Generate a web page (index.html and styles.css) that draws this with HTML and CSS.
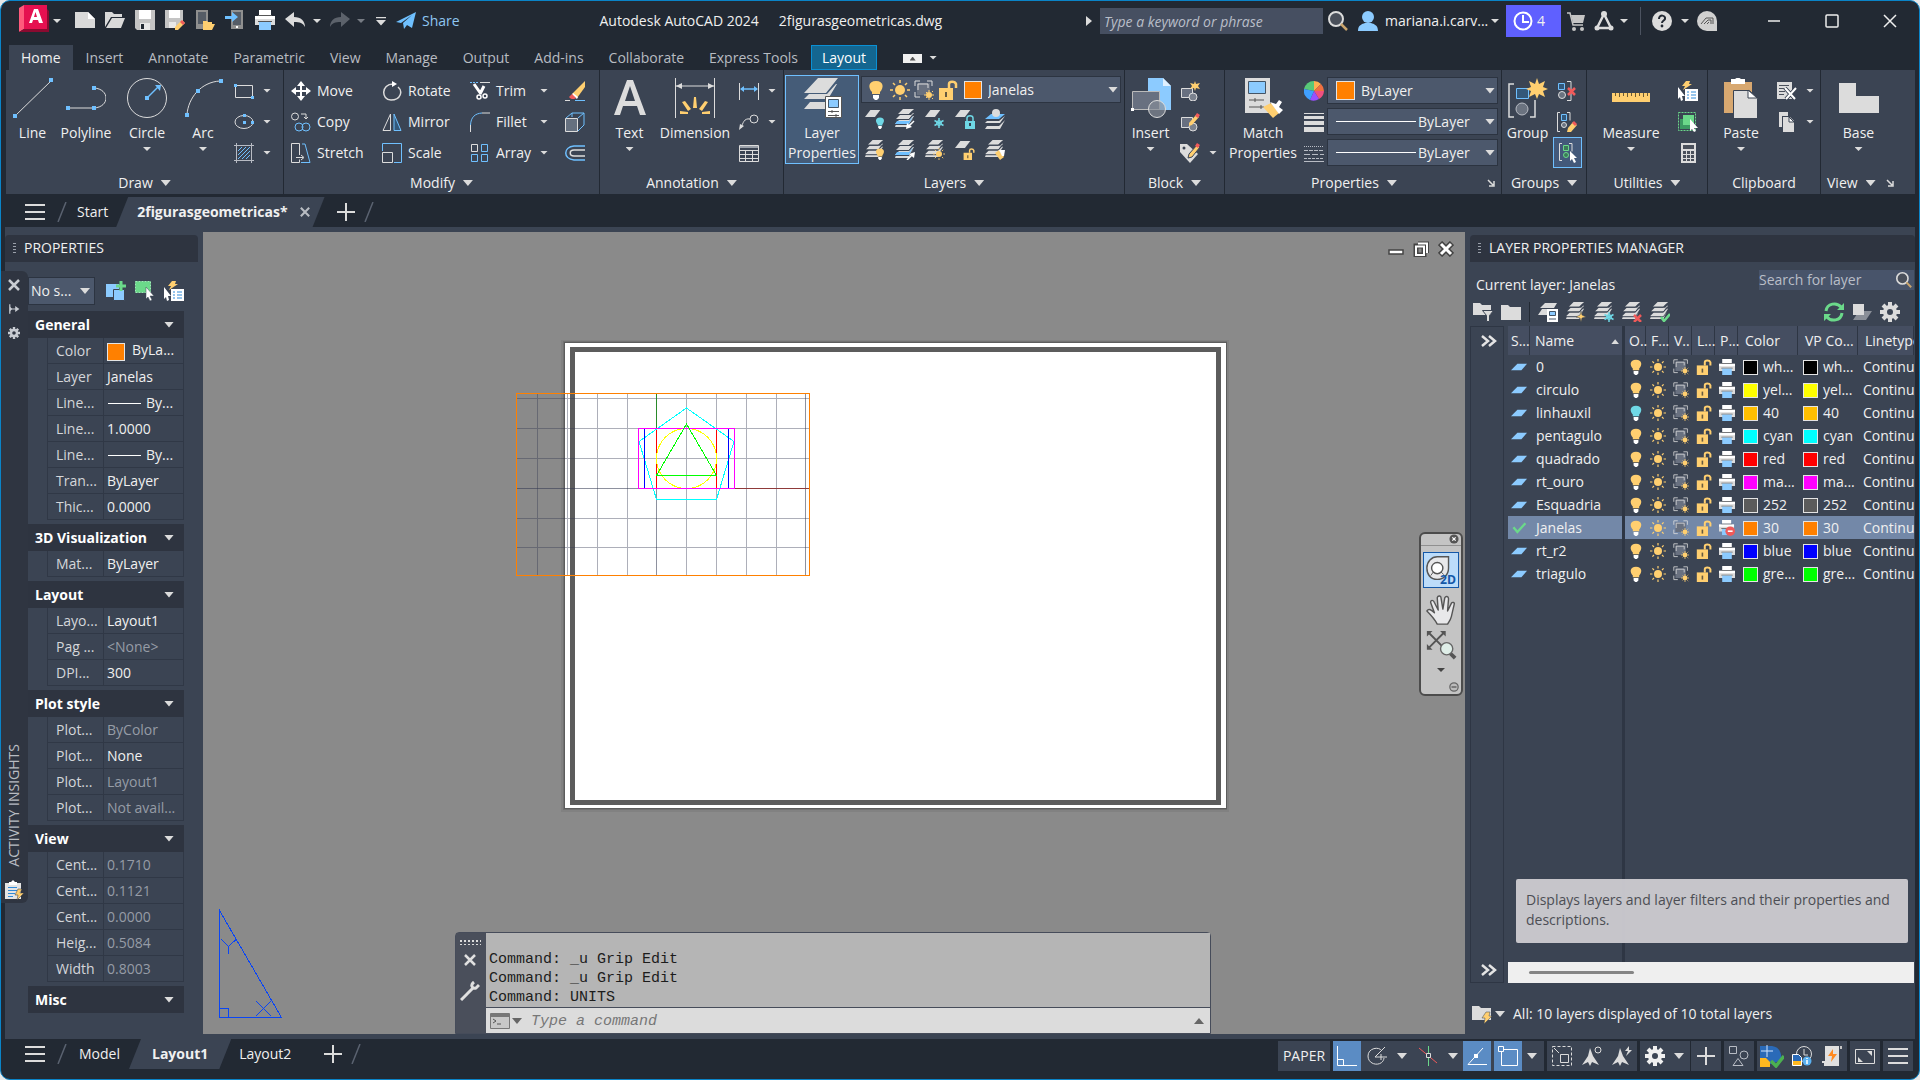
FILE: index.html
```html
<!DOCTYPE html>
<html lang="en">
<head>
<meta charset="utf-8">
<title>Autodesk AutoCAD 2024 - 2figurasgeometricas.dwg</title>
<link rel="stylesheet" href="styles.css">
</head>
<body>
<svg class="sprite" aria-hidden="true">
  <!-- quick access -->
  <symbol id="new" viewBox="0 0 20 20"><path fill="#d9d9d9" d="M0 2h13l7 7v9H0z"/><path fill="#fff" d="M13 2v7h7z"/></symbol>
  <symbol id="open" viewBox="0 0 20 20"><path fill="#d9d9d9" d="M0 2h7l2 2h8v3H6L0 17z"/><path fill="#d9d9d9" d="M7 8h13l-4 10H1z"/></symbol>
  <symbol id="save" viewBox="0 0 20 20"><path fill="#c4c4c4" d="M0 0h20v20H2l-2-2z"/><path fill="#fff" d="M4 0h12v9H4z"/><path fill="#e8e8e8" d="M5 13h10v7H5z"/><path fill="#222933" d="M6 14h3v5H6z"/></symbol>
  <symbol id="saveas" viewBox="0 0 20 20"><path fill="#c4c4c4" d="M0 0h18v11l-7 7H0z"/><path fill="#fff" d="M4 0h11v8H4z"/><path fill="#e8e8e8" d="M4 12h7v6H4z"/><path fill="#ffcf70" d="M17 10l3 3-7 7-3 0 0-3z"/><path fill="#f05a5a" d="M17 10l3 3-2 2-3-3z"/></symbol>
  <symbol id="mobopen" viewBox="0 0 20 20"><path fill="#8f8f8f" d="M1 0h12v19H1z"/><path fill="#555c66" d="M3 2h8v12H3z"/><path fill="#ffcf70" d="M8 11h4l1 1h4v2h3l-3 6H8z"/></symbol>
  <symbol id="mobsave" viewBox="0 0 20 20"><path fill="#8f8f8f" d="M6 0h12v19H6z"/><path fill="#555c66" d="M8 2h8v13H8z"/><path fill="#fff" d="M11 16h2v2h-2z"/><path fill="#6fc0ff" d="M0 6h7V2l6 5-6 5V9H0z"/></symbol>
  <symbol id="print" viewBox="0 0 20 20"><path fill="#fff" d="M4 0h12v5H4z"/><path fill="#dcdcdc" d="M0 6h20v9H0z"/><path fill="#555" d="M3 5h14v1H3zM3 11h14v1H3z"/><path fill="#fff" d="M0 6h20v3H0z"/><path fill="#8ccbff" d="M4 12h12v8H4z"/></symbol>
  <symbol id="undo" viewBox="0 0 20 20"><path fill="currentColor" d="M0 9l9-7v5c7 0 11 4 11 10-2-4-5-5-11-5v5z"/></symbol>
  <symbol id="redo" viewBox="0 0 20 20"><path fill="currentColor" d="M20 9l-9-7v5C4 7 0 11 0 17c2-4 5-5 11-5v5z"/></symbol>
  <symbol id="plane" viewBox="0 0 20 20"><path fill="#6fc0ff" d="M0 11L20 1l-4 16-5-3-3 4-1-6 9-8L5 12z"/></symbol>
  <symbol id="mag" viewBox="0 0 20 20"><circle cx="8" cy="8" r="7" fill="#4a505b" stroke="#dcdcdc" stroke-width="2"/><path stroke="#c9a46c" stroke-width="2.500" d="M13 13l6 6"/></symbol>
  <symbol id="user" viewBox="0 0 20 20"><circle cx="10" cy="6" r="6" fill="#8ccbff"/><path fill="#8ccbff" d="M0 20c0-6 4-7 7-8h6c3 1 7 2 7 8z"/></symbol>
  <symbol id="clock" viewBox="0 0 20 20"><circle cx="10" cy="10" r="8.500" fill="none" stroke="#fff" stroke-width="2"/><path fill="none" stroke="#fff" stroke-width="2" d="M10 4v7h6"/></symbol>
  <symbol id="cart" viewBox="0 0 20 20"><path fill="none" stroke="#c4c4c4" stroke-width="1.500" d="M1 2h3l3 12h10"/><path fill="#c4c4c4" d="M5 4h14l-2 8H7z"/><circle cx="8" cy="18" r="2" fill="#c4c4c4"/><circle cx="16" cy="18" r="2" fill="#c4c4c4"/></symbol>
  <symbol id="acc" viewBox="0 0 20 20"><path fill="none" stroke="#dcdcdc" stroke-width="2.500" d="M10 3L3 17h14z"/><circle cx="10" cy="3" r="3" fill="#dcdcdc"/><circle cx="3" cy="17" r="2.500" fill="#dcdcdc"/><circle cx="17" cy="17" r="2.500" fill="#dcdcdc"/></symbol>
  <symbol id="help" viewBox="0 0 20 20"><circle cx="10" cy="10" r="10" fill="#dcdcdc"/><path fill="none" stroke="#222933" stroke-width="2" d="M7 8c0-5 7-4 6 0-1 2-3 2-3 4"/><circle cx="10" cy="15" r="1.400" fill="#222933"/></symbol>
  <symbol id="adsk" viewBox="0 0 20 20"><path fill="#d0d0d0" d="M10 0a10 10 0 0110 10v10H10A10 10 0 0110 0z"/><path fill="none" stroke="#555" d="M4 13l5-6h7v6M7 13l4-4h3v4M10 13l2-2"/></symbol>
  <!-- draw -->
  <symbol id="line" viewBox="0 0 40 40"><path stroke="#dcdcdc" d="M2 38L39 2"/><path fill="#6fc0ff" d="M0 36h4v4H0zM36 0h4v4h-4z"/></symbol>
  <symbol id="pline" viewBox="0 0 40 40"><path fill="none" stroke="#dcdcdc" d="M2 30h26c16-1 16-19 0-20"/><path fill="#6fc0ff" d="M0 28h4v4H0zM26 28h4v4h-4zM26 8h4v4h-4z"/></symbol>
  <symbol id="circ" viewBox="0 0 40 40"><circle cx="20" cy="20" r="19.500" fill="none" stroke="#dcdcdc"/><path stroke="#6fc0ff" stroke-width="1.500" d="M20 20L32 8"/><path fill="#6fc0ff" d="M18 18h4v4h-4zM28 7l6 0-1 6z"/></symbol>
  <symbol id="arc" viewBox="0 0 40 40"><path fill="none" stroke="#dcdcdc" d="M4 37C5 20 18 4 37 3"/><path fill="#6fc0ff" d="M2 35h4v4H2zM13 11h4v4h-4zM36 1h4v4h-4z"/></symbol>
  <symbol id="rect" viewBox="0 0 20 20"><path fill="none" stroke="#dcdcdc" d="M1.500 4.500h17v12h-17z"/><path fill="#6fc0ff" d="M0 3h3v3H0zM17 15h3v3h-3z"/></symbol>
  <symbol id="ell" viewBox="0 0 20 20"><ellipse cx="10" cy="10" rx="9" ry="6.500" fill="none" stroke="#dcdcdc"/><path fill="#6fc0ff" d="M9 2h3v3H9zM9 9h3v3H9zM17 9h3v3h-3z"/></symbol>
  <symbol id="hatch" viewBox="0 0 20 20"><path stroke="#b8bcc4" d="M2.500 0v20M17.500 0v20M0 2.500h20M0 17.500h20"/><path stroke="#6fc0ff" d="M4 8l4-4M4 12l8-8M4 16L16 4M8 16l8-8M12 16l4-4"/></symbol>
  <!-- modify -->
  <symbol id="move" viewBox="0 0 20 20"><path fill="#fff" d="M10 0l4 5h-3v4h4V6l5 4-5 4v-3h-4v4h3l-4 5-4-5h3v-4H5v3l-5-4 5-4v3h4V5H6z"/></symbol>
  <symbol id="rotate" viewBox="0 0 20 20"><path fill="none" stroke="#dcdcdc" stroke-width="1.500" d="M11 3C-1 3-1 19 9 19c10 0 12-9 7-13"/><path fill="#fff" d="M10 0l5 3-5 3z"/></symbol>
  <symbol id="trim" viewBox="0 0 20 20"><path stroke="#6fc0ff" stroke-dasharray="2 1" d="M0 1.500h9"/><path stroke="#dcdcdc" d="M10 1.500h10"/><path stroke="#fff" stroke-width="3" d="M4 3l7 10M14 5l-4 8"/><circle cx="9" cy="16" r="2" fill="none" stroke="#fff" stroke-width="1.500"/><circle cx="15" cy="15" r="2" fill="none" stroke="#fff" stroke-width="1.500"/></symbol>
  <symbol id="erase" viewBox="0 0 20 20"><path fill="#ffcf70" d="M20 0v6l-8 11-5-4z"/><path fill="#fff" d="M8 12l5 4-1 2-5-4z"/><path fill="#f05a5a" d="M7 13l4 4c-2 2-6 1-7-1z"/><path stroke="#6fc0ff" d="M10 19.500h10"/><path stroke="#dcdcdc" d="M0 19.500h5"/></symbol>
  <symbol id="copy" viewBox="0 0 20 20"><g fill="none" stroke="#dcdcdc"><circle cx="4" cy="4.500" r="3.500"/><path d="M10 2h5v5M13 5l2 2 2-2"/></g><g fill="none" stroke="#6fc0ff"><circle cx="8" cy="15" r="4"/><circle cx="15" cy="15" r="4"/></g></symbol>
  <symbol id="mirror" viewBox="0 0 20 20"><path fill="none" stroke="#dcdcdc" d="M8.500 2v16.500H1z"/><path fill="#33587a" stroke="#6fc0ff" d="M12 2v16.500h7z"/></symbol>
  <symbol id="fillet" viewBox="0 0 20 20"><path fill="none" stroke="#6fc0ff" d="M.5 13C1 5 5 1.500 12 1"/><path stroke="#dcdcdc" d="M12 1h8M.5 13v7"/></symbol>
  <symbol id="box" viewBox="0 0 20 20"><path fill="#65707f" stroke="#dcdcdc" d="M.5 6.500h12v13H.5z"/><path fill="none" stroke="#6fc0ff" d="M1 6l6-5h12v12l-6 6M13 6l6-5M7 1v4"/></symbol>
  <symbol id="stretch" viewBox="0 0 20 20"><path fill="none" stroke="#dcdcdc" d="M8.500 12V.5h-8v19h8v-3M5 14.500h7M10 12l3 2.500-3 2.500"/><path fill="none" stroke="#6fc0ff" d="M11 1h3l5 18.500h-9"/></symbol>
  <symbol id="scale" viewBox="0 0 20 20"><path fill="none" stroke="#6fc0ff" d="M.5 8V.5h19v19H12"/><path fill="none" stroke="#dcdcdc" d="M.5 9.500h10v10H.5z"/></symbol>
  <symbol id="array" viewBox="0 0 20 20"><path fill="none" stroke="#dcdcdc" d="M1.500 1.500h6v7h-6z"/><path fill="none" stroke="#6fc0ff" d="M11.500 1.500h6v7h-6zM1.500 11.500h6v7h-6zM11.500 11.500h6v7h-6z"/></symbol>
  <symbol id="offset" viewBox="0 0 20 20"><path fill="none" stroke="#6fc0ff" stroke-width="1.500" d="M20 3H9C-2 4-2 16 9 17h11"/><path fill="none" stroke="#dcdcdc" stroke-width="1.500" d="M20 7H9C4 7 4 13 9 13h11"/></symbol>
  <!-- annotation -->
  <symbol id="text" viewBox="0 0 40 40"><path fill="#dcdcdc" fill-rule="evenodd" d="M4 37L17 2h6l13 35h-6l-3-9H13l-3 9zM15 23h10L20 8z"/></symbol>
  <symbol id="dim" viewBox="0 0 40 40"><path stroke="#dcdcdc" d="M.5 0v40M39.500 0v40M1 8h38"/><path fill="#dcdcdc" d="M1 8l6-3v6zM39 8l-6-3v6z"/><path fill="#ffcf70" d="M18 30l1-11h2l1 11zM7 24l3-1 6 8-3 2zM33 24l-3-1-6 8 3 2zM5 36v-3l8 1v2zM35 36v-3l-8 1v2z"/></symbol>
  <symbol id="lindim" viewBox="0 0 20 20"><path stroke="#dcdcdc" d="M.5 2v17M19.500 2v17"/><path stroke="#6fc0ff" stroke-width="1.500" d="M2 8h16"/><path fill="#6fc0ff" d="M1 8l4-3v6zM19 8l-4-3v6z"/></symbol>
  <symbol id="leader" viewBox="0 0 20 20"><circle cx="15" cy="7" r="4" fill="none" stroke="#dcdcdc"/><path fill="none" stroke="#dcdcdc" d="M11 7c-6-1-7 4-9 9"/><path fill="#dcdcdc" d="M0 18l1-6 4 2z"/></symbol>
  <symbol id="table" viewBox="0 0 20 20"><path fill="none" stroke="#dcdcdc" d="M.5 2.500h19v16H.5zM.5 7.500h19M.5 11.500h19M.5 15.500h19M6.500 7v11M13.500 7v11"/><path fill="#9ba1aa" d="M1 3h18v2H1z"/></symbol>
  <!-- layers -->
  <symbol id="stack" viewBox="0 0 20 20"><path fill="#dcdcdc" d="M8 0h11l-5 5H3zM6 6h10l2-2h1l-5 6H1l4-4zM5 11h9l4-4h1l-5 8H0l4-4z"/><path fill="#dcdcdc" d="M1 15h12l5-5-4 8H0z"/><path fill="none" stroke="#3b4453" d="M2 5.500h12l4-4M1 10.500h13l4-5M0 15.500h14l4-5"/></symbol>
  <symbol id="sheet" viewBox="0 0 20 20"><path fill="#dcdcdc" d="M6 1h11l-6 8H0z"/></symbol>
  <symbol id="layerprop" viewBox="0 0 40 40"><path fill="#dcdcdc" d="M16 0h20L24 15H2zM11 16h14l9-10h1l-9 15H2l5-5zM11 24h13v7H2l6-7z"/><path fill="#fff" stroke="#555" d="M23.500 18.500h16v21h-16z"/><path fill="#8ccbff" stroke="#456" d="M26.500 21.500h10v8h-10z"/><path stroke="#555" d="M26 33.500h11M26 37.500h11M30 32v3M34 36v3"/></symbol>
  <symbol id="bulb" viewBox="0 0 20 20"><path fill="#ffcf70" d="M10 1c8 0 8 7 4 11v2H6v-2C2 8 2 1 10 1z"/><path fill="#fff" d="M7 15h6v3l-2 2H9l-2-2z"/></symbol>
  <symbol id="bulboff" viewBox="0 0 20 20"><path fill="#6fd8e6" d="M10 1c8 0 8 7 4 11v2H6v-2C2 8 2 1 10 1z"/><path fill="#fff" d="M7 15h6v3l-2 2H9l-2-2z"/></symbol>
  <symbol id="sun" viewBox="0 0 20 20"><circle cx="10" cy="10" r="5" fill="#ffcf70"/><path stroke="#ffcf70" stroke-width="1.500" d="M10 0v3M10 17v3M0 10h3M17 10h3M3 3l2 2M15 15l2 2M3 17l2-2M15 5l2-2"/></symbol>
  <symbol id="vp" viewBox="0 0 20 20"><path fill="#697180" d="M3 3h13v12H3z"/><path fill="none" stroke="#dcdcdc" d="M1 6V1h5M13 1h5v5M1 12v5h5M4 10V4h10v4"/><circle cx="15" cy="15" r="3" fill="#ffcf70"/><path stroke="#ffcf70" d="M15 10v2M15 18v2M10 15h2M18 15h2M12 12l1 1M18 18l1 1M12 18l1-1M18 12l1-1"/></symbol>
  <symbol id="lock" viewBox="0 0 20 20"><path fill="#ffcf70" d="M1 8h14v12H1z"/><path fill="none" stroke="#ffcf70" stroke-width="2.500" d="M11 8V4c0-3 6-3 7 0v4"/><path fill="#665a40" d="M7 12h2v5H7z"/></symbol>
  <symbol id="l-off" viewBox="0 0 20 20"><use href="#sheet" width="18" height="18"/><use href="#bulboff" x="9" y="8" width="12" height="12"/></symbol>
  <symbol id="l-iso" viewBox="0 0 20 20"><use href="#stack" width="20" height="20"/><path fill="#6fc0ff" d="M2 12h12l4-5-4 8H0z"/><path stroke="#fff" stroke-width="1.500" d="M19 12l-6 6"/><path fill="#fff" d="M11 20l1-6 5 4z"/></symbol>
  <symbol id="l-uniso" viewBox="0 0 20 20"><use href="#stack" width="20" height="20"/><path fill="#6fc0ff" d="M2 12h12l4-5-4 8H0z"/><path stroke="#fff" stroke-width="1.500" d="M12 20l6-6"/><path fill="#fff" d="M20 12l-1 6-5-4z"/></symbol>
  <symbol id="flake" viewBox="0 0 20 20"><path stroke="#6fd8e6" stroke-width="3" d="M10 0v20M1 5l18 10M19 5L1 15"/><circle cx="10" cy="10" r="5" fill="none" stroke="#6fd8e6" stroke-width="2"/></symbol>
  <symbol id="l-frz" viewBox="0 0 20 20"><use href="#sheet" width="18" height="18"/><use href="#flake" x="9" y="9" width="10" height="10"/></symbol>
  <symbol id="l-lock" viewBox="0 0 20 20"><use href="#sheet" width="18" height="18"/><path fill="#6fd8e6" d="M10 12h10v8H10z"/><path fill="none" stroke="#6fd8e6" stroke-width="1.500" d="M12 12V9c0-3 6-3 6 0v3"/><path fill="#345" d="M14 14h2v3h-2z"/></symbol>
  <symbol id="l-cur" viewBox="0 0 20 20"><path fill="#6fc0ff" d="M6 5h14l-6 5H0z"/><path fill="#dcdcdc" d="M2 12h12l6-5-5 7H0zM2 17h12l6-6-5 9H0z"/><circle cx="11" cy="4" r="4" fill="#dcdcdc"/></symbol>
  <symbol id="l-on" viewBox="0 0 20 20"><use href="#stack" width="19" height="19"/><use href="#bulb" x="9" y="8" width="12" height="12"/></symbol>
  <symbol id="l-thaw" viewBox="0 0 20 20"><use href="#stack" width="19" height="19"/><use href="#sun" x="8" y="8" width="12" height="12"/></symbol>
  <symbol id="l-unl" viewBox="0 0 20 20"><use href="#sheet" width="18" height="18"/><use href="#lock" x="8" y="8" width="12" height="12"/></symbol>
  <symbol id="l-mat" viewBox="0 0 20 20"><use href="#stack" width="19" height="19"/><path fill="#ffcf70" d="M10 13l4-3 5 7-4 3z"/><path fill="#fff" d="M14 10l6 0-1 6-2 0z"/></symbol>
  <!-- block -->
  <symbol id="insert" viewBox="0 0 40 40"><path fill="#8ccbff" d="M17 0h15l8 8v24H17z"/><path fill="#dff0ff" d="M32 0v8h8z"/><path fill="#687080" stroke="#bbb" d="M1.500 13.500h27v18h-27z"/><circle cx="26" cy="31" r="8.500" fill="#878d98aa" stroke="#dcdcdc"/><path fill="#fff" d="M0 30h3v3H0z"/></symbol>
  <symbol id="b-new" viewBox="0 0 20 20"><path fill="#687080" stroke="#dcdcdc" d="M1.500 7.500h11v9h-11z"/><circle cx="13" cy="16" r="4" fill="#7b828e" stroke="#dcdcdc"/><path fill="#ffcf70" d="M15 0l1 3 4-1-2 3 2 3-4-1-1 3-1-3-4 1 2-3-2-3 4 1z"/></symbol>
  <symbol id="b-edit" viewBox="0 0 20 20"><path fill="#687080" stroke="#dcdcdc" d="M1.500 5.500h11v10h-11z"/><circle cx="13" cy="15" r="4" fill="#7b828e" stroke="#dcdcdc"/><path fill="#ffcf70" d="M16 3l3 2-7 8-3 1 0-3z"/><path fill="#f05a5a" d="M17 1l3 2-2 3-3-2z"/></symbol>
  <symbol id="b-tag" viewBox="0 0 20 20"><path fill="#dcdcdc" d="M0 1h7l11 10-8 9L0 9z"/><circle cx="4" cy="5" r="1.500" fill="#3b4453"/><path fill="#ffcf70" stroke="#3b4453" d="M17 2l3 2-8 10-4 1 1-4z"/><path fill="#f05a5a" d="M17 0l3 2-2 3-3-2z"/></symbol>
  <!-- properties -->
  <symbol id="match" viewBox="0 0 40 40"><path fill="#dcdcdc" d="M2 0h25v35H2z"/><path fill="#8ccbff" stroke="#456" d="M5.500 3.500h17v12h-17z"/><path stroke="#555" d="M6 22h15M6 29h15M12 20v4M18 27v4"/><path fill="#ffcf70" d="M20 29l8-4 8 10-6 5z"/><path fill="#fff" d="M27 24l6 2 3-4 3 2-3 5 4 3-4 4z"/></symbol>
  <symbol id="wheel" viewBox="0 0 20 20"><path fill="#58c878" d="M10 10L10 0A10 10 0 000 8z"/><path fill="#ffb050" d="M10 10V0a10 10 0 017 3z"/><path fill="#f07040" d="M10 10l7-7a10 10 0 013 7z"/><path fill="#f05080" d="M10 10h10a10 10 0 01-5 8z"/><path fill="#9a50ff" d="M10 10l5 8a10 10 0 01-9 1z"/><path fill="#40a0ff" d="M10 10l-4 9a10 10 0 01-6-11z"/></symbol>
  <symbol id="lw" viewBox="0 0 20 20"><path fill="#dcdcdc" d="M0 1h20v1H0zM0 4h20v3H0zM0 9h20v4H0zM0 15h20v5H0z"/></symbol>
  <symbol id="lt" viewBox="0 0 20 20"><g fill="none" stroke="#b8bcc4"><path stroke-dasharray="1 1" d="M0 3.500h20"/><path stroke-dasharray="4 1" d="M0 7.500h20"/><path stroke-dasharray="6 2" d="M0 11.500h20"/><path d="M0 15.500h20" stroke-dasharray="3 1"/><path d="M0 18.500h20"/></g></symbol>
  <!-- groups and utilities -->
  <symbol id="group" viewBox="0 0 40 40"><path fill="none" stroke="#dcdcdc" stroke-width="1.500" d="M6 6H1v33h5M22 39h5V22"/><path fill="#33587a" stroke="#6fc0ff" d="M8.500 10.500h12v10h-12z"/><circle cx="14" cy="31" r="6" fill="#6b7380" stroke="#b8bcc4"/><path fill="#ffcf70" d="M29 0l2 6 6-3-2 6 5 2-5 2 2 6-6-3-2 5-2-5-6 3 2-6-5-2 5-2-2-6 6 3z"/></symbol>
  <symbol id="ungroup" viewBox="0 0 20 20"><path fill="#33587a" stroke="#6fc0ff" d="M1.500 2.500h6v6h-6z"/><circle cx="5" cy="14" r="3.500" fill="#6b7380" stroke="#dcdcdc"/><path fill="none" stroke="#dcdcdc" d="M10 .5h4v19h-4"/><path stroke="#f05a5a" stroke-width="2.500" d="M11 7l7 7M18 7l-7 7"/></symbol>
  <symbol id="gedit" viewBox="0 0 20 20"><path fill="none" stroke="#dcdcdc" d="M3 .5H.5v19H3M10 .5h3v8"/><path fill="#33587a" stroke="#6fc0ff" d="M4.500 2.500h5v6h-5z"/><circle cx="7" cy="13" r="2.500" fill="#6b7380" stroke="#dcdcdc"/><path fill="#ffcf70" d="M16 10l4 3-6 7h-4l1-4z"/><path fill="#f05a5a" d="M17 9l3 3-2 2-3-3z"/></symbol>
  <symbol id="gsel" viewBox="0 0 20 20"><path fill="none" stroke="#dcdcdc" d="M4 .5H1.500v17H4M11 .5h3v8"/><path fill="#3c7a5a" stroke="#6bd98a" d="M5.500 2.500h5v5h-5z"/><circle cx="8" cy="12" r="2.500" fill="#3c7a5a" stroke="#6bd98a"/><path fill="#fff" d="M12 8l7 7-3 0 2 4-2 1-2-4-2 2z"/></symbol>
  <symbol id="ruler" viewBox="0 0 40 40"><path fill="#ffcf70" d="M1 15h38v9H1z"/><path stroke="#6b5a34" d="M4.500 15v3M8.500 15v4M12.500 15v3M16.500 15v4M20.500 15v3M24.500 15v4M28.500 15v3M32.500 15v4M36.500 15v3"/></symbol>
  <symbol id="qsel" viewBox="0 0 20 20"><path fill="#ffcf70" d="M8 0h4l-1 3h3l-9 6 2-4H4z"/><path fill="#fff" d="M0 6l7 9-3 0 1 4-2 1-1-4-2 2zM7 8h13v12H7z"/><path stroke="#2f8ad8" d="M9 11h2M13 11h5M9 14h2M13 14h5M9 17h2M13 17h5"/></symbol>
  <symbol id="selall" viewBox="0 0 20 20"><path fill="none" stroke="#6bd98a" stroke-dasharray="2 1" d="M.5 .5h17v18H.5z"/><path fill="#3c9a62" d="M2 7h10v10H2z"/><path fill="#6bd98a" d="M5 3h11v10H5z"/><path fill="#fff" d="M12 7l8 9-4 0 2 3-2 1-2-3-2 2z"/></symbol>
  <symbol id="calc" viewBox="0 0 20 20"><path fill="#dcdcdc" d="M3 0h15v20H3z"/><path fill="#4a505b" d="M5 2h11v4H5zM5 8h3v3H5zM9 8h3v3H9zM13 8h3v3h-3zM5 12h3v3H5zM9 12h3v3H9zM13 12h3v3h-3zM5 16h3v2H5zM9 16h3v2H9zM13 16h3v2h-3z"/></symbol>
  <symbol id="paste" viewBox="0 0 40 40"><path fill="#d8a870" d="M3 4h28v31H3z"/><path fill="#fff" d="M10 1h4l3-2 3 2h4v5H10z"/><path fill="#dcdcdc" stroke="#3b4453" d="M12.500 12.500h16l8 8v20h-24z"/><path fill="#fff" stroke="#3b4453" d="M27 12v8h9z"/></symbol>
  <symbol id="cut" viewBox="0 0 20 20"><path fill="#dcdcdc" d="M0 1h15v17H0z"/><path stroke="#4a505b" d="M2 4.500h10M2 7.500h8M2 10.500h6M2 13.500h5"/><path stroke="#3b4453" stroke-width="4" d="M8 7l10 11M19 7L9 18"/><path stroke="#fff" stroke-width="2" d="M8 7l10 11M19 7L9 18"/></symbol>
  <symbol id="copyc" viewBox="0 0 20 20"><path fill="#dcdcdc" d="M2 0h9v4H5v11H2z"/><path fill="#dcdcdc" d="M6 5h7l4 4v11H6z"/><path fill="#fff" stroke="#3b4453" d="M12 5v5h5z"/></symbol>
  <symbol id="base" viewBox="0 0 40 40"><path fill="#dcdcdc" d="M0 5h17v13h23v17H0z"/></symbol>
  <!-- palettes -->
  <symbol id="gear" viewBox="0 0 20 20"><circle cx="10" cy="10" r="5" fill="none" stroke="currentColor" stroke-width="4"/><path stroke="currentColor" stroke-width="4" d="M10 0v4M10 16v4M0 10h4M16 10h4M3 3l3 3M14 14l3 3M3 17l3-3M14 6l3-3"/></symbol>
  <symbol id="pin" viewBox="0 0 20 20"><path fill="none" stroke="currentColor" stroke-width="2" d="M3 2v16M3 10h12"/><path fill="currentColor" d="M12 5l7 5-7 5zM3 6l4 4-4 4z"/></symbol>
  <symbol id="insights" viewBox="0 0 20 20"><path fill="#e4e4e4" d="M1 3h16v16H1z"/><path fill="#fff" d="M5 2h2l2-2 2 2h2v3H5z"/><path stroke="#2f8ad8" d="M4 7.500h9M4 10.500h9M4 13.500h7M4 16.500h5"/><path fill="#ffcf70" stroke="#2f3541" stroke-width=".5" d="M14 9h4l-2 4h4l-7 7 1-5h-3z"/></symbol>
  <symbol id="pick" viewBox="0 0 20 20"><path fill="#8ccbff" d="M0 3h13v13H0z"/><path fill="#8ccbff" stroke="#3b4453" d="M7.500 8.500h11v11h-11z"/><path stroke="#6bd98a" stroke-width="3" d="M15 0v10M10 5h10"/></symbol>
  <symbol id="selobj" viewBox="0 0 20 20"><path fill="#6bd98a" stroke="#9bf0b4" stroke-dasharray="2 1" d="M.5 .5h15v11H.5z"/><path fill="#fff" stroke="#3b4453" stroke-width=".5" d="M11 6l8 9-4 0 2 4-2 1-2-4-2 2z"/></symbol>
  <symbol id="chev" viewBox="0 0 16 16"><path fill="none" stroke="#e4e4e4" stroke-width="2.500" d="M1 3l6 5-6 5M8 3l6 5-6 5"/></symbol>
  <symbol id="ffilter" viewBox="0 0 20 20"><path fill="#dcdcdc" d="M0 1h7l2 2h9v10H0z"/><path fill="#dcdcdc" stroke="#3b4453" d="M9.500 8.500h11l-4 5v6h-3v-6z"/></symbol>
  <symbol id="folder" viewBox="0 0 20 20"><path fill="#dcdcdc" d="M0 3h7l2 2h11v13H0z"/></symbol>
  <symbol id="lstate" viewBox="0 0 20 20"><path fill="#dcdcdc" d="M7 1h12l-3 5H2zM4 7h6v6H0z"/><path fill="#fff" d="M9 7h11v13H9z"/><path fill="#8ccbff" stroke="#456" d="M11.500 9.500h6v4h-6z"/><path stroke="#456" d="M11 17h7"/></symbol>
  <symbol id="lnew" viewBox="0 0 20 20"><use href="#stack" width="19" height="19"/><path fill="#ffcf70" stroke="#3b4453" stroke-width=".5" d="M15 9l1 4 4 2-4 1-1 4-1-4-4-1 4-2z"/></symbol>
  <symbol id="lvp" viewBox="0 0 20 20"><use href="#stack" width="19" height="19"/><use href="#flake" x="10" y="10" width="10" height="10"/></symbol>
  <symbol id="ldel" viewBox="0 0 20 20"><use href="#stack" width="19" height="19"/><path stroke="#f05a5a" stroke-width="2.500" d="M12 13l7 7M19 13l-7 7"/></symbol>
  <symbol id="lset" viewBox="0 0 20 20"><use href="#stack" width="19" height="19"/><path fill="none" stroke="#6bd98a" stroke-width="2.500" d="M11 15l3 4 6-7"/></symbol>
  <symbol id="refresh" viewBox="0 0 20 20"><path fill="none" stroke="#6bd98a" stroke-width="3" d="M2 9c1-8 11-9 15-4M18 11c-1 8-11 9-15 4"/><path fill="#6bd98a" d="M20 1v7h-7zM0 19v-7h7z"/></symbol>
  <symbol id="ovr" viewBox="0 0 20 20"><path fill="#8a8f98" d="M7 9h13l-6 9H1z"/><path fill="#dcdcdc" d="M1 2h11v11H1z"/></symbol>
  <symbol id="fbolt" viewBox="0 0 20 20"><path fill="#dcdcdc" d="M0 2h7l2 2h10v12H0z"/><path fill="#ffcf70" stroke="#3b4453" stroke-width=".5" d="M14 8h4l-1 4h3l-8 8 1-6h-3z"/></symbol>
  <symbol id="lay" viewBox="0 0 20 20"><path fill="#8ccbff" d="M8 6h12l-7 8H0z"/></symbol>
  <symbol id="tick" viewBox="0 0 20 20"><path fill="none" stroke="#6bd98a" stroke-width="3" d="M3 9l5 6L18 4"/></symbol>
  <symbol id="noprint" viewBox="0 0 20 20"><use href="#print" width="19" height="19"/><circle cx="14" cy="14" r="6" fill="#f05a5a"/><path stroke="#fff" stroke-width="2" d="M11 14h6"/></symbol>
  <!-- status bar -->
  <symbol id="ham" viewBox="0 0 20 20"><path fill="#dcdcdc" d="M0 2h20v2H0zM0 9h20v2H0zM0 16h20v2H0z"/></symbol>
  <symbol id="plus" viewBox="0 0 20 20"><path fill="#dcdcdc" d="M9 1h2v8h8v2h-8v8H9v-8H1V9h8z"/></symbol>
  <symbol id="ortho" viewBox="0 0 20 20"><path fill="none" stroke="#fff" d="M.5 0v19.500H20M.5 13.500h6v6"/></symbol>
  <symbol id="polar" viewBox="0 0 20 20"><path fill="none" stroke="#dcdcdc" d="M17 12c-1 9-16 8-16-2C1 2 12 0 15 5M8 11L18 1M8 11h12M14 8v6"/></symbol>
  <symbol id="iso" viewBox="0 0 20 20"><path stroke="#6bd98a" d="M10.500 0v20"/><path stroke="#f05a5a" d="M1 2l18 15"/><path fill="#3b4453" stroke="#dcdcdc" d="M8.500 7.500h4v4h-4z"/></symbol>
  <symbol id="otrack" viewBox="0 0 20 20"><path fill="none" stroke="#fff" d="M16 2L1 18.500h19"/><path fill="#fff" d="M7 8h4v4H7z"/></symbol>
  <symbol id="osnap" viewBox="0 0 20 20"><path fill="none" stroke="#fff" d="M6 3.500h13.500v16h-16V6M.5 .5h5v5h-5z"/></symbol>
  <symbol id="annovis" viewBox="0 0 20 20"><path fill="none" stroke="#dcdcdc" stroke-dasharray="3 2" d="M.5 .5h19v19H.5z"/><path fill="none" stroke="#dcdcdc" d="M8.500 8.500h8v8h-8zM2 2l5 5"/></symbol>
  <symbol id="anno1" viewBox="0 0 20 20"><path fill="#dcdcdc" d="M8 2l3 8 6 9-7-3-2 4-2-4-6 3 6-9z"/><circle cx="16" cy="4" r="3" fill="none" stroke="#dcdcdc"/></symbol>
  <symbol id="anno2" viewBox="0 0 20 20"><path fill="#dcdcdc" d="M8 2l3 8 6 9-7-3-2 4-2-4-6 3 6-9zM17 0l-4 5h3l-2 5 6-6h-3z"/></symbol>
  <symbol id="isol" viewBox="0 0 20 20"><path fill="none" stroke="#b8bcc4" d="M.5 .5h7v7h-7zM9 12.500l5 7H4z"/><circle cx="15" cy="9" r="4" fill="none" stroke="#b8bcc4"/></symbol>
  <symbol id="trust" viewBox="0 0 24 24"><path fill="#2a6ab8" d="M0 2h12c8 1 10 8 9 14l-9 4H0z"/><path fill="#ffb820" d="M0 14h6l4 4v5H0z"/><path stroke="#cfe4ff" d="M7 1v12M1 7h12"/><path fill="none" stroke="#4cb050" stroke-width="3.500" d="M11 17l5 5 8-10"/></symbol>
  <symbol id="hist" viewBox="0 0 20 20"><circle cx="12" cy="8" r="7.500" fill="none" stroke="#dcdcdc"/><path fill="none" stroke="#dcdcdc" d="M12 3v6h4"/><path fill="#2a6ab8" stroke="#fff" d="M.5 8.500h6l3 3v8h-9z"/><path fill="#ffb820" d="M1 15h8v4H1z"/><circle cx="15" cy="15" r="4.500" fill="#5ab0f0"/><path stroke="#fff" stroke-width="1.500" d="M15 12v1M15 14v4"/></symbol>
  <symbol id="script" viewBox="0 0 20 20"><path fill="#e0e0e0" d="M3 0h14v20H2v-3H0v-2h3z"/><path fill="#ff8a20" d="M11 3l-5 7h4l-1 6 6-8h-4z"/><path fill="#c4c4c4" d="M18 0h2v3h-2z"/></symbol>
  <symbol id="full" viewBox="0 0 20 20"><path fill="none" stroke="#dcdcdc" d="M.5 3.500h19v14H.5z"/><path fill="#dcdcdc" d="M12 5h5v5zM3 16v-5l5 5z"/></symbol>
  <symbol id="slash" viewBox="0 0 10 20"><path stroke="#5a6270" stroke-width="1.500" d="M9 0L1 20"/></symbol>
  <symbol id="launch" viewBox="0 0 8 8"><path fill="none" stroke="#dcdcdc" stroke-width="1.500" d="M1 1l5 5M7 2v5H2"/></symbol>
  <symbol id="x" viewBox="0 0 12 12"><path stroke="currentColor" stroke-width="2.500" d="M1 1l10 10M11 1L1 11"/></symbol>
</svg>

<div class="window">
  <header class="titlebar">
    <button class="logo" aria-label="Application menu"><svg viewBox="0 0 30 28"><path fill="#ff5a7c" d="M0 3l5-3v24l-5 3z"/><path fill="#e51050" d="M5 0h23v24H5z"/><path fill="#8a0a30" d="M0 27l5-3h23v-20l2 2v21z"/><path fill="#fff" fill-rule="evenodd" d="M10 18l5-14h4l5 14h-4l-1-3h-5l-1 3zM15 12h3l-1.500-5z"/></svg></button>
    <span class="caret"></span>
    <nav class="qat">
      <button aria-label="New"><svg><use href="#new"/></svg></button>
      <button aria-label="Open"><svg><use href="#open"/></svg></button>
      <button aria-label="Save"><svg><use href="#save"/></svg></button>
      <button aria-label="Save As"><svg><use href="#saveas"/></svg></button>
      <button aria-label="Open from Web and Mobile"><svg><use href="#mobopen"/></svg></button>
      <button aria-label="Save to Web and Mobile"><svg><use href="#mobsave"/></svg></button>
      <button aria-label="Plot"><svg><use href="#print"/></svg></button>
      <button aria-label="Undo"><svg><use href="#undo"/></svg></button>
    </nav>
    <span class="caret"></span>
    <button class="redo" aria-label="Redo"><svg><use href="#redo"/></svg></button>
    <span class="caret dim"></span>
    <span class="caret custom"></span>
    <button class="share"><svg><use href="#plane"/></svg>Share</button>
    <h1><span>Autodesk AutoCAD 2024</span><span>2figurasgeometricas.dwg</span></h1>
    <div class="account">
      <span class="play"></span>
      <input class="search" type="text" placeholder="Type a keyword or phrase" aria-label="Search help">
      <button class="find" aria-label="Search"><svg><use href="#mag"/></svg></button>
      <button class="usr"><svg><use href="#user"/></svg>mariana.i.carv...</button>
      <span class="caret"></span>
      <button class="trial"><svg><use href="#clock"/></svg>4</button>
      <button class="cart" aria-label="App store"><svg><use href="#cart"/></svg></button>
      <button class="acc" aria-label="Autodesk apps"><svg><use href="#acc"/></svg></button>
      <span class="caret"></span>
      <span class="vsep"></span>
      <button aria-label="Help"><svg><use href="#help"/></svg></button>
      <span class="caret hc"></span>
      <button aria-label="Assistant"><svg><use href="#adsk"/></svg></button>
    </div>
    <div class="wincontrols">
      <button aria-label="Minimize"><svg viewBox="0 0 16 16"><path stroke="#eee" stroke-width="1.500" d="M2 8h12"/></svg></button>
      <button aria-label="Maximize"><svg viewBox="0 0 16 16"><rect x="2" y="2" width="12" height="12" rx="1" fill="none" stroke="#eee" stroke-width="1.500"/></svg></button>
      <button aria-label="Close"><svg viewBox="0 0 16 16"><path stroke="#eee" stroke-width="1.500" d="M2 2l12 12M14 2L2 14"/></svg></button>
    </div>
  </header>

  <nav class="tabs">
    <button class="on">Home</button><button>Insert</button><button>Annotate</button><button>Parametric</button><button>View</button><button>Manage</button><button>Output</button><button>Add-ins</button><button>Collaborate</button><button>Express Tools</button><button class="ctx">Layout</button>
    <button class="chip" aria-label="Minimize ribbon"><span></span></button><span class="caret"></span>
  </nav>

  <div class="ribbon">
    <section class="panel draw">
      <div class="tools">
        <button class="big w41"><svg><use href="#line"/></svg>Line</button>
        <button class="big w66"><svg><use href="#pline"/></svg>Polyline</button>
        <button class="big w56"><svg><use href="#circ"/></svg>Circle<span class="caret"></span></button>
        <button class="big w56"><svg><use href="#arc"/></svg>Arc<span class="caret"></span></button>
        <div class="rows small">
          <button aria-label="Rectangle"><svg><use href="#rect"/></svg><span class="caret"></span></button>
          <button aria-label="Ellipse"><svg><use href="#ell"/></svg><span class="caret"></span></button>
          <button aria-label="Hatch"><svg><use href="#hatch"/></svg><span class="caret"></span></button>
        </div>
      </div>
      <h2>Draw<span class="caret lg"></span></h2>
    </section>
    <section class="panel modify">
      <div class="tools">
        <div class="rows w91">
          <button><svg><use href="#move"/></svg>Move</button>
          <button><svg><use href="#copy"/></svg>Copy</button>
          <button><svg><use href="#stretch"/></svg>Stretch</button>
        </div>
        <div class="rows w88">
          <button><svg><use href="#rotate"/></svg>Rotate</button>
          <button><svg><use href="#mirror"/></svg>Mirror</button>
          <button><svg><use href="#scale"/></svg>Scale</button>
        </div>
        <div class="rows w95">
          <button><svg><use href="#trim"/></svg><span class="lab">Trim</span><span class="caret"></span></button>
          <button><svg><use href="#fillet"/></svg><span class="lab">Fillet</span><span class="caret"></span></button>
          <button><svg><use href="#array"/></svg><span class="lab">Array</span><span class="caret"></span></button>
        </div>
        <div class="rows">
          <button aria-label="Erase"><svg><use href="#erase"/></svg></button>
          <button aria-label="Explode"><svg><use href="#box"/></svg></button>
          <button aria-label="Offset"><svg><use href="#offset"/></svg></button>
        </div>
      </div>
      <h2>Modify<span class="caret lg"></span></h2>
    </section>
    <section class="panel annotation">
      <div class="tools">
        <button class="big w51"><svg><use href="#text"/></svg>Text<span class="caret"></span></button>
        <button class="big w80"><svg><use href="#dim"/></svg>Dimension</button>
        <div class="rows small">
          <button aria-label="Linear"><svg><use href="#lindim"/></svg><span class="caret"></span></button>
          <button aria-label="Leader"><svg><use href="#leader"/></svg><span class="caret"></span></button>
          <button aria-label="Table"><svg><use href="#table"/></svg></button>
        </div>
      </div>
      <h2>Annotation<span class="caret lg"></span></h2>
    </section>
    <section class="panel layers">
      <div class="tools">
        <button class="big active"><svg><use href="#layerprop"/></svg>Layer<br>Properties</button>
        <div class="layergrid">
          <div class="combo">
            <svg><use href="#bulb"/></svg><svg><use href="#sun"/></svg><svg><use href="#vp"/></svg><svg><use href="#lock"/></svg>
            <span class="sw orange"></span>
            <select aria-label="Layer"><option>Janelas</option></select><span class="caret lg"></span>
          </div>
          <div class="iconrow">
            <button aria-label="Off"><svg><use href="#l-off"/></svg></button><button aria-label="Isolate"><svg><use href="#l-iso"/></svg></button><button aria-label="Freeze"><svg><use href="#l-frz"/></svg></button><button aria-label="Lock"><svg><use href="#l-lock"/></svg></button><button aria-label="Make Current"><svg><use href="#l-cur"/></svg></button>
          </div>
          <div class="iconrow">
            <button aria-label="Turn All Layers On"><svg><use href="#l-on"/></svg></button><button aria-label="Unisolate"><svg><use href="#l-uniso"/></svg></button><button aria-label="Thaw All Layers"><svg><use href="#l-thaw"/></svg></button><button aria-label="Unlock"><svg><use href="#l-unl"/></svg></button><button aria-label="Match Layer"><svg><use href="#l-mat"/></svg></button>
          </div>
        </div>
      </div>
      <h2>Layers<span class="caret lg"></span></h2>
    </section>
    <section class="panel block">
      <div class="tools">
        <button class="big w51"><svg><use href="#insert"/></svg>Insert<span class="caret"></span></button>
        <div class="rows small">
          <button aria-label="Create"><svg><use href="#b-new"/></svg></button>
          <button aria-label="Edit"><svg><use href="#b-edit"/></svg></button>
          <button aria-label="Edit Attributes"><svg><use href="#b-tag"/></svg><span class="caret"></span></button>
        </div>
      </div>
      <h2>Block<span class="caret lg"></span></h2>
    </section>
    <section class="panel props">
      <div class="tools">
        <button class="big w75"><svg><use href="#match"/></svg>Match<br>Properties</button>
        <div class="rows">
          <div class="field"><svg><use href="#wheel"/></svg><div class="combo"><span class="sw orange"></span><select aria-label="Object Color"><option>ByLayer</option></select><span class="caret lg"></span></div></div>
          <div class="field"><svg><use href="#lw"/></svg><div class="combo"><span class="rule"></span><select aria-label="Lineweight"><option>ByLayer</option></select><span class="caret lg"></span></div></div>
          <div class="field"><svg><use href="#lt"/></svg><div class="combo"><span class="rule"></span><select aria-label="Linetype"><option>ByLayer</option></select><span class="caret lg"></span></div></div>
        </div>
      </div>
      <h2>Properties<span class="caret lg"></span><svg class="launch"><use href="#launch"/></svg></h2>
    </section>
    <section class="panel groups">
      <div class="tools">
        <button class="big w51"><svg><use href="#group"/></svg>Group</button>
        <div class="rows">
          <button aria-label="Ungroup"><svg><use href="#ungroup"/></svg></button>
          <button aria-label="Group Edit"><svg><use href="#gedit"/></svg></button>
          <button class="pressed" aria-label="Group Selection On/Off"><svg><use href="#gsel"/></svg></button>
        </div>
      </div>
      <h2>Groups<span class="caret lg"></span></h2>
    </section>
    <section class="panel utils">
      <div class="tools">
        <button class="big w88"><svg><use href="#ruler"/></svg>Measure<span class="caret"></span></button>
        <div class="rows">
          <button aria-label="Quick Select"><svg><use href="#qsel"/></svg></button>
          <button aria-label="Select All"><svg><use href="#selall"/></svg></button>
          <button aria-label="Quick Calculator"><svg><use href="#calc"/></svg></button>
        </div>
      </div>
      <h2>Utilities<span class="caret lg"></span></h2>
    </section>
    <section class="panel clip">
      <div class="tools">
        <button class="big w66"><svg><use href="#paste"/></svg>Paste<span class="caret"></span></button>
        <div class="rows small">
          <button aria-label="Cut"><svg><use href="#cut"/></svg><span class="caret"></span></button>
          <button aria-label="Copy Clip"><svg><use href="#copyc"/></svg><span class="caret"></span></button>
        </div>
      </div>
      <h2>Clipboard</h2>
    </section>
    <section class="panel view">
      <div class="tools">
        <button class="big w75"><svg><use href="#base"/></svg>Base<span class="caret"></span></button>
      </div>
      <h2>View<span class="caret lg"></span><svg class="launch"><use href="#launch"/></svg></h2>
    </section>
  </div>

  <nav class="doctabs">
    <button class="menu" aria-label="Menu"><svg><use href="#ham"/></svg></button>
    <svg class="slash"><use href="#slash"/></svg>
    <button class="start">Start</button>
    <div class="doc"><button>2figurasgeometricas*</button><button class="close" aria-label="Close tab"><svg><use href="#x"/></svg></button></div>
    <button class="add" aria-label="New tab"><svg><use href="#plus"/></svg></button>
    <svg class="slash"><use href="#slash"/></svg>
  </nav>

  <main class="work">
    <aside class="palette left">
      <h2 class="ptitle"><span class="grip"></span>PROPERTIES</h2>
      <div class="pbody">
        <div class="strip">
          <button aria-label="Close"><svg><use href="#x"/></svg></button>
          <button aria-label="Auto-hide"><svg><use href="#pin"/></svg></button>
          <button aria-label="Settings"><svg><use href="#gear"/></svg></button>
          <span class="vtext">ACTIVITY INSIGHTS</span>
          <svg class="ins"><use href="#insights"/></svg>
        </div>
        <div class="fields">
          <div class="selrow">
            <div class="combo"><select aria-label="Selection"><option>No s...</option></select><span class="caret lg"></span></div>
            <button aria-label="Toggle PICKADD"><svg><use href="#pick"/></svg></button>
            <button aria-label="Select Objects"><svg><use href="#selobj"/></svg></button>
            <button aria-label="Quick Select"><svg><use href="#qsel"/></svg></button>
          </div>
          <button class="cat">General<span class="caret lg"></span></button>
          <table>
            <tr><th>Color</th><td><span class="sw orange"></span>ByLa...</td></tr>
            <tr><th>Layer</th><td>Janelas</td></tr>
            <tr><th>Line...</th><td><span class="rule"></span>By...</td></tr>
            <tr><th>Line...</th><td>1.0000</td></tr>
            <tr><th>Line...</th><td><span class="rule"></span>By...</td></tr>
            <tr><th>Tran...</th><td>ByLayer</td></tr>
            <tr><th>Thic...</th><td>0.0000</td></tr>
          </table>
          <button class="cat">3D Visualization<span class="caret lg"></span></button>
          <table>
            <tr><th>Mat...</th><td>ByLayer</td></tr>
          </table>
          <button class="cat">Layout<span class="caret lg"></span></button>
          <table>
            <tr><th>Layo...</th><td>Layout1</td></tr>
            <tr><th>Pag ...</th><td class="ro">&lt;None&gt;</td></tr>
            <tr><th>DPI...</th><td>300</td></tr>
          </table>
          <button class="cat">Plot style<span class="caret lg"></span></button>
          <table>
            <tr><th>Plot...</th><td class="ro">ByColor</td></tr>
            <tr><th>Plot...</th><td>None</td></tr>
            <tr><th>Plot...</th><td class="ro">Layout1</td></tr>
            <tr><th>Plot...</th><td class="ro">Not avail...</td></tr>
          </table>
          <button class="cat">View<span class="caret lg"></span></button>
          <table>
            <tr><th>Cent...</th><td class="ro">0.1710</td></tr>
            <tr><th>Cent...</th><td class="ro">0.1121</td></tr>
            <tr><th>Cent...</th><td class="ro">0.0000</td></tr>
            <tr><th>Heig...</th><td class="ro">0.5084</td></tr>
            <tr><th>Width</th><td class="ro">0.8003</td></tr>
          </table>
          <button class="cat">Misc<span class="caret lg"></span></button>
        </div>
      </div>
    </aside>

    <div class="canvas">
      <svg class="drawing" viewBox="203 232 1262 802" preserveAspectRatio="xMinYMin meet" shape-rendering="crispEdges" fill="none">
        <!-- paper sheet with its frame -->
        <rect x="561" y="340" width="668" height="472" fill="#000" opacity=".06"/>
        <rect x="563" y="341" width="664" height="469" fill="#000" opacity=".12"/>
        <rect x="564.500" y="342.500" width="662" height="466" fill="#fff" stroke="#5c5c5c"/>
        <rect x="572.500" y="349.500" width="646" height="453" stroke="#5c5c5c" stroke-width="5"/>
        <!-- viewport grid -->
        <path stroke="#323750" stroke-opacity=".4" d="M537.500 393v182M567.500 393v182M597.500 393v182M627.500 393v182M686.500 393v182M716.500 393v182M746.500 393v182M776.500 393v182M516 398.500h293M516 428.500h293M516 458.500h293M516 518.500h293M516 547.500h293"/>
        <path stroke="#323750" stroke-opacity=".55" d="M516 488.500h122M656.500 489v86M805.500 393v182"/>
        <path stroke="#2a8a2a" d="M656.500 393v36"/>
        <path stroke="#8f3a3a" d="M735 488.500h74"/>
        <!-- figures -->
        <path stroke="#0ff" d="M686.500 408L734 441.500 716.500 499.500H656.500L639 441.500z"/>
        <path stroke="#00f" d="M644.500 429v59M728.500 429v59"/>
        <path stroke="red" d="M656.500 430v23M716.500 430v23M656.500 464v24M716.500 464v24"/>
        <circle cx="686.500" cy="458.500" r="30" stroke="#ff0"/>
        <path stroke="#f0f" d="M638.500 428.500h96v60h-96z"/>
        <path stroke="#0f0" d="M686.500 424l30 51.500h-60z"/>
        <path stroke="#ff8000" d="M516.500 393.500h293v182h-293z"/>
        <!-- UCS icon -->
        <path stroke="#0a46f5" d="M219.500 910.500v107h62zM219.500 1008.500h9v9M221 939l7.500 7.500 8-7.500M228.500 946v8M256 1001l15 15M271 1001l-15 15"/>
      </svg>
      <div class="vpctl">
        <button aria-label="Minimize viewport"><svg viewBox="0 0 16 16"><path fill="#fff" stroke="#444" stroke-width="1.500" d="M1 9h14v4H1z"/></svg></button>
        <button aria-label="Restore viewport"><svg viewBox="0 0 16 16"><path fill="none" stroke="#444" stroke-width="5" d="M5 3h9v9M3 5h8v9H3z"/><path fill="none" stroke="#fff" stroke-width="2" d="M5 2.500h9V12M3 5.500h8V14H3z"/></svg></button>
        <button aria-label="Close viewport"><svg viewBox="0 0 16 16"><path stroke="#444" stroke-width="6" d="M2 2l12 12M14 2L2 14"/><path stroke="#fff" stroke-width="3" d="M3 3l10 10M13 3L3 13"/></svg></button>
      </div>
      <div class="navbar">
        <div class="navtop"><svg viewBox="0 0 12 12"><circle cx="6" cy="6" r="5.500" fill="#555"/><path stroke="#fff" stroke-width="1.500" d="M4 4l4 4M8 4L4 8"/></svg></div>
        <button class="wheel" aria-label="Steering Wheel"><svg viewBox="0 0 34 34"><path fill="#e8e8ea" stroke="#555" stroke-width="1.500" d="M25 3v12c0 7-5 12-12 12S2 22 2 15 7 3 13 3z"/><circle cx="13" cy="15" r="6" fill="#fff" stroke="#555" stroke-width="1.500"/><path stroke="#555" d="M9 19l-3 4M17 19l3 3"/><text x="16" y="32" font-size="13" font-weight="700" fill="#1458a8">2D</text></svg></button>
        <button aria-label="Pan"><svg viewBox="0 0 34 34"><path fill="#e8e8ea" stroke="#555" stroke-width="1.500" stroke-linejoin="round" d="M13 32C10 26 6 22 2 18c2-3 5-1 8 2L6 9c0-3 3-3 4 0l4 8-1-13c1-3 4-2 4 0l2 12 2-12c1-2 4-2 4 1l-1 13 4-8c1-2 4-1 3 1l-3 13c-1 4-3 6-4 8z"/></svg></button>
        <button class="extents" aria-label="Zoom Extents"><svg viewBox="0 0 34 34"><path stroke="#555" stroke-width="2" d="M4 4l16 16M20 4L4 20"/><path fill="#555" d="M2 2h6L2 8zM22 2h-6l6 6zM2 22v-6l6 6z"/><path stroke="#555" stroke-width="4" d="M27 26l5 5"/><circle cx="23" cy="21" r="6.500" fill="#dfeee8" stroke="#666" stroke-width="1.500"/></svg></button>
        <span class="caret"></span>
        <svg class="navend" viewBox="0 0 12 12"><circle cx="6" cy="6" r="5" fill="#bbb" stroke="#666" stroke-width="1.500"/><path stroke="#555" stroke-width="1.500" d="M3 6h6"/></svg>
      </div>
      <section class="cmd">
        <div class="cmdbar">
          <span class="dots"></span>
          <button aria-label="Close"><svg><use href="#x"/></svg></button>
          <button aria-label="Customize"><svg viewBox="0 0 20 20"><path stroke="#e0e0e0" stroke-width="3" d="M1 19L13 7"/><path fill="none" stroke="#e0e0e0" stroke-width="3" d="M14 1c-4 3-2 7 2 6l3-3"/></svg></button>
        </div>
        <div class="cmdmain">
          <pre>Command: _u Grip Edit
Command: _u Grip Edit
Command: UNITS</pre>
          <div class="cmdline">
            <svg viewBox="0 0 20 16"><path fill="#c8c8c8" stroke="#777" d="M.5 .5h19v15H.5z"/><path fill="#777" d="M1 1h18v3H1z"/><path fill="none" stroke="#555" d="M3 6l3 2-3 2M7 11h4"/></svg>
            <span class="caret lg"></span>
            <input type="text" placeholder="Type a command" aria-label="Command">
            <span class="up"></span>
          </div>
        </div>
      </section>
    </div>

    <aside class="palette right">
      <h2 class="ptitle"><span class="grip"></span>LAYER PROPERTIES MANAGER</h2>
      <div class="current"><span>Current layer: Janelas</span><div class="lsearch"><input type="text" placeholder="Search for layer" aria-label="Search for layer"><svg><use href="#mag"/></svg></div></div>
      <div class="ltools">
        <button aria-label="New Property Filter"><svg><use href="#ffilter"/></svg></button>
        <button aria-label="New Group Filter"><svg><use href="#folder"/></svg></button>
        <span class="vsep"></span>
        <button aria-label="Layer States"><svg><use href="#lstate"/></svg></button>
        <button aria-label="New Layer"><svg><use href="#lnew"/></svg></button>
        <button aria-label="New Layer Frozen"><svg><use href="#lvp"/></svg></button>
        <button aria-label="Delete Layer"><svg><use href="#ldel"/></svg></button>
        <button aria-label="Set Current"><svg><use href="#lset"/></svg></button>
        <span class="grow"></span>
        <button aria-label="Refresh"><svg><use href="#refresh"/></svg></button>
        <button aria-label="Overrides"><svg><use href="#ovr"/></svg></button>
        <button aria-label="Settings"><svg><use href="#gear"/></svg></button>
      </div>
      <div class="lbody">
        <div class="filter"><button aria-label="Expand"><svg><use href="#chev"/></svg></button><button aria-label="Expand tree"><svg><use href="#chev"/></svg></button></div>
        <div class="list">
          <table>
            <colgroup><col class="c22"><col class="c92"><col class="c24"><col class="c23"><col class="c23"><col class="c23"><col class="c23"><col class="c60"><col class="c60"><col></colgroup>
            <thead><tr><th class="st">S...</th><th class="name">Name<span class="up"></span></th><th class="split">O..</th><th>F...</th><th>V..</th><th>L...</th><th>P...</th><th class="pad">Color</th><th class="pad">VP Co...</th><th class="pad">Linetype</th></tr></thead>
            <tbody>
            <tr><td><svg><use href="#lay"/></svg></td><td>0</td><td class="split"><svg><use href="#bulb"/></svg></td><td><svg><use href="#sun"/></svg></td><td><svg><use href="#vp"/></svg></td><td><svg><use href="#lock"/></svg></td><td><svg><use href="#print"/></svg></td><td><span class="sw black"></span>wh...</td><td><span class="sw black"></span>wh...</td><td>Continuous</td></tr>
            <tr><td><svg><use href="#lay"/></svg></td><td>circulo</td><td class="split"><svg><use href="#bulb"/></svg></td><td><svg><use href="#sun"/></svg></td><td><svg><use href="#vp"/></svg></td><td><svg><use href="#lock"/></svg></td><td><svg><use href="#print"/></svg></td><td><span class="sw yellow"></span>yel...</td><td><span class="sw yellow"></span>yel...</td><td>Continuous</td></tr>
            <tr><td><svg><use href="#lay"/></svg></td><td>linhauxil</td><td class="split"><svg><use href="#bulboff"/></svg></td><td><svg><use href="#sun"/></svg></td><td><svg><use href="#vp"/></svg></td><td><svg><use href="#lock"/></svg></td><td><svg><use href="#print"/></svg></td><td><span class="sw amber"></span>40</td><td><span class="sw amber"></span>40</td><td>Continuous</td></tr>
            <tr><td><svg><use href="#lay"/></svg></td><td>pentagulo</td><td class="split"><svg><use href="#bulb"/></svg></td><td><svg><use href="#sun"/></svg></td><td><svg><use href="#vp"/></svg></td><td><svg><use href="#lock"/></svg></td><td><svg><use href="#print"/></svg></td><td><span class="sw cyan"></span>cyan</td><td><span class="sw cyan"></span>cyan</td><td>Continuous</td></tr>
            <tr><td><svg><use href="#lay"/></svg></td><td>quadrado</td><td class="split"><svg><use href="#bulb"/></svg></td><td><svg><use href="#sun"/></svg></td><td><svg><use href="#vp"/></svg></td><td><svg><use href="#lock"/></svg></td><td><svg><use href="#print"/></svg></td><td><span class="sw red"></span>red</td><td><span class="sw red"></span>red</td><td>Continuous</td></tr>
            <tr><td><svg><use href="#lay"/></svg></td><td>rt_ouro</td><td class="split"><svg><use href="#bulb"/></svg></td><td><svg><use href="#sun"/></svg></td><td><svg><use href="#vp"/></svg></td><td><svg><use href="#lock"/></svg></td><td><svg><use href="#print"/></svg></td><td><span class="sw magenta"></span>ma...</td><td><span class="sw magenta"></span>ma...</td><td>Continuous</td></tr>
            <tr><td><svg><use href="#lay"/></svg></td><td>Esquadria</td><td class="split"><svg><use href="#bulb"/></svg></td><td><svg><use href="#sun"/></svg></td><td><svg><use href="#vp"/></svg></td><td><svg><use href="#lock"/></svg></td><td><svg><use href="#print"/></svg></td><td><span class="sw gray"></span>252</td><td><span class="sw gray"></span>252</td><td>Continuous</td></tr>
            <tr class="sel"><td><svg><use href="#tick"/></svg></td><td>Janelas</td><td class="split"><svg><use href="#bulb"/></svg></td><td><svg><use href="#sun"/></svg></td><td><svg><use href="#vp"/></svg></td><td><svg><use href="#lock"/></svg></td><td><svg><use href="#noprint"/></svg></td><td><span class="sw orange"></span>30</td><td><span class="sw orange"></span>30</td><td>Continuous</td></tr>
            <tr><td><svg><use href="#lay"/></svg></td><td>rt_r2</td><td class="split"><svg><use href="#bulb"/></svg></td><td><svg><use href="#sun"/></svg></td><td><svg><use href="#vp"/></svg></td><td><svg><use href="#lock"/></svg></td><td><svg><use href="#print"/></svg></td><td><span class="sw blue"></span>blue</td><td><span class="sw blue"></span>blue</td><td>Continuous</td></tr>
            <tr><td><svg><use href="#lay"/></svg></td><td>triagulo</td><td class="split"><svg><use href="#bulb"/></svg></td><td><svg><use href="#sun"/></svg></td><td><svg><use href="#vp"/></svg></td><td><svg><use href="#lock"/></svg></td><td><svg><use href="#print"/></svg></td><td><span class="sw green"></span>gre...</td><td><span class="sw green"></span>gre...</td><td>Continuous</td></tr>
            </tbody>
          </table>
          <div class="hscroll"><span></span></div>
          <div class="tip" role="tooltip">Displays layers and layer filters and their properties and descriptions.</div>
        </div>
      </div>
      <div class="lfoot"><svg><use href="#fbolt"/></svg><span class="caret lg"></span><span>All: 10 layers displayed of 10 total layers</span></div>
    </aside>
  </main>

  <footer class="status">
    <nav class="layouts">
      <button class="menu" aria-label="Layouts"><svg><use href="#ham"/></svg></button>
      <svg class="slash"><use href="#slash"/></svg>
      <button class="start">Model</button>
      <button class="current-layout">Layout1</button>
      <button class="other">Layout2</button>
      <button class="add" aria-label="New layout"><svg><use href="#plus"/></svg></button>
      <svg class="slash"><use href="#slash"/></svg>
    </nav>
    <div class="toggles">
      <button class="grp paper">PAPER</button>
      <div class="grp snaps">
        <button class="lit" aria-label="Ortho"><svg><use href="#ortho"/></svg></button>
        <button aria-label="Polar"><svg><use href="#polar"/></svg></button><span class="caret lg"></span>
        <button aria-label="Isodraft"><svg><use href="#iso"/></svg></button><span class="caret lg"></span>
        <button class="lit" aria-label="Object Snap Tracking"><svg><use href="#otrack"/></svg></button>
        <button class="lit" aria-label="Object Snap"><svg><use href="#osnap"/></svg></button><span class="caret lg"></span>
      </div>
      <div class="grp">
        <button aria-label="Annotation Visibility"><svg><use href="#annovis"/></svg></button><button aria-label="AutoScale"><svg><use href="#anno1"/></svg></button><button aria-label="Annotation Scale"><svg><use href="#anno2"/></svg></button>
      </div>
      <div class="pair">
        <div class="grp gearset"><button aria-label="Workspace"><svg><use href="#gear"/></svg></button><span class="caret lg"></span></div>
        <div class="grp"><button aria-label="Annotation Monitor"><svg><use href="#plus"/></svg></button></div>
      </div>
      <div class="grp"><button aria-label="Isolate Objects"><svg><use href="#isol"/></svg></button></div>
      <div class="grp"><button aria-label="Trusted file"><svg class="i24"><use href="#trust"/></svg></button><button aria-label="History"><svg><use href="#hist"/></svg></button><button aria-label="Scripts"><svg><use href="#script"/></svg></button></div>
      <div class="grp"><button aria-label="Clean Screen"><svg><use href="#full"/></svg></button></div>
      <div class="grp"><button aria-label="Customization"><svg><use href="#ham"/></svg></button></div>
    </div>
  </footer>
</div>
</body>
</html>
```
FILE: styles.css
```css
:root {
  --dark: #222933;
  --panel: #3b4453;
  --head: #2e3440;
  --field: #4c586c;
  --text: #f0f0f0;
  --muted: #b8bcc2;
  --accent: #6fc0ff;
}
* { box-sizing: border-box; }
html, body { height: 100%; }
body {
  margin: 0;
  background: #e8e8e8;
  font: 14px/20px "Open Sans", "Noto Sans", sans-serif;
  color: var(--text);
  overflow: hidden;
}
.sprite { position: absolute; width: 0; height: 0; }
svg { display: block; width: 20px; height: 20px; flex: none; }
button, input, select {
  font: inherit; color: inherit; background: none; border: 0; padding: 0; margin: 0;
}
button { display: flex; align-items: center; white-space: nowrap; flex: none; }
h1, h2 { font: inherit; margin: 0; }
input { outline: 0; min-width: 0; }
select { appearance: none; flex: 1; min-width: 0; }
.caret { flex: none; width: 8px; height: 4px; background: #dcdcdc; clip-path: polygon(0 0, 100% 0, 50% 100%); }
.caret.lg { width: 10px; height: 6px; }
.caret.dim { background: #777c84; }
.up { flex: none; width: 8px; height: 5px; background: #dcdcdc; clip-path: polygon(0 100%, 100% 100%, 50% 0); }
.vsep { width: 1px; background: #4c5360; }
.grow { flex: 1; }

.window {
  height: 100%; display: flex; flex-direction: column;
  background: var(--dark); border: 1px solid #0a84c8; border-radius: 10px; overflow: hidden;
}

/* title bar */
.titlebar { display: flex; align-items: center; height: 44px; padding: 0 21px 12px 18px; flex: none; }
.titlebar > .caret { margin: 8px 0 0; }
.logo svg { width: 30px; height: 30px; }
.logo { margin: 4px 4px 0 0; }
.qat { display: flex; gap: 10px; margin: 6px 8px 0 14px; color: #dcdcdc; }
.redo { color: #5c626b; margin: 6px 7px 0 9px; }
.titlebar > .caret.custom { margin-left: 11px; width: 10px; height: 9px; clip-path: polygon(0 0, 100% 0, 100% 20%, 0 20%, 0 40%, 100% 40%, 50% 100%, 0 40%); }
.share { gap: 6px; margin: 8px 0 0 10px; color: #8fc6f2; }
.titlebar h1 { display: flex; gap: 20px; margin: 8px 0 0; flex: 1; justify-content: center; white-space: nowrap; padding-right: 4px; }
.account { display: flex; align-items: center; height: 32px; margin-top: 8px; }
.play { width: 6px; height: 10px; background: #dcdcdc; clip-path: polygon(0 0, 100% 50%, 0 100%); margin-right: 8px; }
.search { width: 223px; height: 26px; background: #464f61; padding: 0 4px; font-style: italic; }
input::placeholder { color: #b9bec8; opacity: 1; }
.find { margin: 0 10px 0 5px; }
.usr { gap: 7px; width: 130px; margin-right: 3px; }
.usr + .caret { margin-right: 7px; }
.trial { width: 55px; height: 32px; background: #5f60ff; gap: 4px; padding-left: 7px; }
.cart { margin: 0 8px 0 5px; }
.acc { margin-right: 6px; }
.account .vsep { height: 28px; margin: 0 11px 0 12px; }
.hc { margin: 0 8px 0 9px; }
.wincontrols { display: flex; gap: 42px; margin: 7px 0 0 49px; }
.wincontrols svg { width: 16px; height: 16px; }

/* ribbon tabs */
.tabs { display: flex; gap: 1px; height: 25px; padding-left: 8px; align-items: center; flex: none; color: var(--muted); }
.tabs button { height: 25px; padding: 0 12px; }
.tabs .on { background: var(--panel); color: var(--text); }
.tabs .ctx { background: #146690; border: 1px solid #0a90d4; padding: 0 10px; color: #fff; }
.tabs .chip { width: 19px; height: 9px; background: #f0f0f0; padding: 0; margin: 2px 6px 0 25px; justify-content: center; }
.chip span { width: 6px; height: 4px; background: #555; clip-path: polygon(0 100%, 100% 100%, 50% 0); }

/* ribbon */
.ribbon { display: flex; height: 124px; margin: 0 4px 0 5px; background: var(--panel); flex: none; }
.panel { display: flex; flex-direction: column; border-right: 1px solid var(--dark); flex: none; }
.panel:last-child { flex: 1; border: 0; }
.tools { display: flex; flex: 1; }
.panel h2 { height: 22px; display: flex; align-items: center; justify-content: center; gap: 8px; }
.big { flex-direction: column; padding-top: 8px; line-height: 20px; align-self: flex-start; }
.big svg { width: 40px; height: 40px; margin-bottom: 5px; }
.big .caret { margin-top: 4px; }
.rows { display: flex; flex-direction: column; padding-top: 5px; }
.rows > button, .field { display: flex; align-items: center; height: 31px; gap: 6px; }
.small > button { gap: 9px; }
.lab { width: 38px; text-align: left; }
.w41 { width: 41px; } .w51 { width: 51px; } .w56 { width: 56px; } .w66 { width: 66px; }
.w75 { width: 75px; } .w80 { width: 80px; } .w88 { width: 88px; } .w91 { width: 91px; } .w95 { width: 95px; }
.draw { width: 278px; } .draw .tools { padding-left: 6px; } .draw .small { padding-left: 3px; }
.modify { width: 316px; } .modify .tools { padding-left: 7px; }
.annotation { width: 184px; } .annotation .tools { padding-left: 4px; } .annotation .small { padding-left: 4px; }
.layers { width: 341px; } .layers .tools { padding-left: 1px; }
.block { width: 100px; } .block .small { padding-left: 4px; }
.props { width: 277px; } .groups { width: 85px; } .utils { width: 121px; } .clip { width: 113px; }
.active { width: 74px; margin-top: 5px; padding-top: 2px; background: #455c78; border: 1px solid var(--accent); }
.layergrid { flex: 1; padding: 6px 3px 0 2px; }
.layergrid .combo { width: 100%; }
.combo { display: flex; align-items: center; height: 27px; background: var(--field); border: 1px solid #2c3441; padding-right: 2px; }
.layers .combo { gap: 4px; padding-left: 4px; }
.layers .combo .sw { width: 18px; height: 18px; margin: 0 2px; }
.iconrow { display: flex; gap: 10px; padding-left: 4px; height: 31px; align-items: center; }
.sw { display: inline-block; flex: none; width: 15px; height: 15px; border: 1px solid #e4e4e4; }
.orange { background: #ff8000; } .black { background: #000; } .yellow { background: #ff0; }
.amber { background: #ffbf00; } .cyan { background: #0ff; } .red { background: red; }
.magenta { background: #f0f; } .gray { background: #5b5b5b; } .blue { background: #00f; } .green { background: #0f0; }
.props .big { width: 76px; } .field { gap: 3px; } .props .rows { padding-left: 3px; }
.props .combo { width: 171px; padding-left: 8px; }
.props .combo .sw { width: 19px; height: 19px; margin-right: 6px; }
.rule { flex: none; display: inline-block; height: 1px; background: #fff; }
.props .rule { width: 80px; margin-right: 2px; }
.launch { width: 8px; height: 8px; }
.props h2 { padding-left: 80px; } .props .launch { margin-left: 82px; }
.groups .rows button { padding: 0 4px; }
.pressed { border: 1px solid var(--accent); background: #43597a; width: 29px; }
.utils .rows { padding-left: 3px; }
.clip .small { padding-left: 3px; }
.view h2 { justify-content: flex-start; padding-left: 6px; } .view .launch { margin-left: 2px; }

/* document tabs */
.doctabs { display: flex; align-items: center; height: 33px; padding: 3px 0 0 24px; flex: none; }
.slash { width: 10px; height: 20px; }
.menu { margin-right: 12px; }
.start { margin-left: 10px; }
.doc { display: flex; align-items: center; gap: 12px; height: 30px; margin-left: 8px; padding: 0 15px 0 21px; background: var(--panel); clip-path: polygon(12px 0, 100% 0, calc(100% - 12px) 100%, 0 100%); font-weight: 700; }
.doc .close { color: #b8bcc2; }
.doc .close svg { width: 10px; height: 10px; }
.add { margin: 0 8px 0 11px; }

/* work area */
.work { display: flex; flex: 1; min-height: 0; margin: 0 4px; background: var(--panel); }
.palette { display: flex; flex-direction: column; padding-top: 8px; flex: none; }
.palette.left { width: 198px; }
.palette.right { width: 450px; padding-left: 5px; padding-bottom: 5px; }
.ptitle { display: flex; align-items: center; gap: 8px; height: 27px; padding: 0 0 2px 8px; background: var(--head); border-radius: 4px 4px 0 0; flex: none; }
.left .ptitle { margin-right: 5px; }
.grip { width: 3px; height: 10px; background: repeating-linear-gradient(#9aa0aa 0 1px, transparent 1px 3px); }
.pbody { display: flex; margin: 9px 0 0 -4px; }
.strip { display: flex; flex-direction: column; align-items: center; width: 27px; height: 632px; padding: 2px 1px 3px 0; background: #2f3541; border-radius: 0 6px 6px 0; color: #c8ccd2; }
.strip button { height: 24px; }
.strip button svg { width: 12px; height: 12px; }
.vtext { writing-mode: vertical-rl; transform: rotate(180deg); margin: auto 0 13px; color: #b8bcc2; line-height: 20px; }
.fields { width: 156px; padding-top: 6px; }
.selrow { display: flex; align-items: center; gap: 9px; margin-bottom: 6px; }
.selrow .combo { width: 68px; height: 28px; padding: 0 4px 0 2px; margin-right: 2px; }
.cat { width: 100%; height: 27px; padding: 0 10px 0 7px; background: var(--head); justify-content: space-between; font-weight: 700; color: #fff; }
.fields table { width: 137px; margin: 0 0 4px 19px; border-collapse: separate; border-spacing: 0; table-layout: fixed; }
.fields th, .fields td { height: 26px; border: solid #303846; border-width: 0 1px 1px 0; padding: 0; white-space: nowrap; overflow: hidden; line-height: 20px; }
.fields th { width: 57px; border-left-width: 1px; font-weight: 400; text-align: left; padding-left: 8px; color: #d4d6da; }
.fields td { padding-left: 3px; }
.fields .ro { color: #969ca6; }
.fields .sw { width: 18px; height: 18px; margin-right: 7px; vertical-align: middle; }
.fields .rule { width: 33px; margin: 0 5px 0 1px; vertical-align: middle; }

/* drawing canvas */
.canvas { position: relative; flex: 1; min-width: 0; margin: 5px 0; background: #8a8a8a; overflow: hidden; }
.drawing { width: 100%; height: 100%; }
.vpctl { position: absolute; top: 9px; right: 11px; display: flex; gap: 9px; }
.vpctl svg { width: 16px; height: 16px; }
.navbar { position: absolute; top: 300px; right: 2px; width: 44px; height: 164px; display: flex; flex-direction: column; align-items: center; background: #c4c4c4; border: 2px solid #4c4c4c; border-radius: 6px; }
.navtop { align-self: stretch; display: flex; justify-content: flex-end; height: 12px; border-bottom: 1px solid #909090; margin-bottom: 6px; padding-right: 2px; }
.navbar svg { width: 32px; height: 32px; }
.navbar .navtop svg, .navbar .navend { width: 10px; height: 10px; }
.navbar .wheel { width: 36px; height: 36px; background: #bcdcfa; border: 1px solid #1458a8; justify-content: center; margin-bottom: 6px; }
.extents { margin-top: 3px; }
.navbar .caret { background: #444; margin-top: 7px; }
.navend { align-self: flex-end; margin: 10px 2px 0 0; }
.cmd { position: absolute; left: 252px; right: 254px; bottom: 0; height: 102px; display: flex; border: 1px solid #464c5a; border-radius: 4px 4px 0 0; }
.cmdbar { width: 30px; background: #4a4f5b; display: flex; flex-direction: column; align-items: center; gap: 9px; padding: 6px 3px 0 0; color: #e0e0e0; }
.dots { width: 22px; height: 6px; background: radial-gradient(circle, #dcdcdc 1px, transparent 1px) 0 0 / 4px 4px; }
.cmdbar button svg { width: 12px; height: 12px; }
.cmdbar button:last-child { margin-top: 6px; }
.cmdbar button:last-child svg { width: 20px; height: 20px; }
.cmdmain { flex: 1; display: flex; flex-direction: column; justify-content: flex-end; background: #b5b5b5; font: 15px/19px "Liberation Mono", monospace; color: #1c1c1c; }
.cmdmain pre { font: inherit; margin: 0 0 0 3px; }
.cmdline { display: flex; align-items: center; height: 26px; background: #dcdcdc; border-top: 1px solid #464c5a; padding: 1px 6px 0 4px; }
.cmdline svg { height: 16px; }
.cmdline .caret { background: #666; margin: 0 9px 0 2px; }
.cmdline input { flex: 1; font-style: italic; }
.cmdline input::placeholder { color: #777; }
.cmdline .up { background: #666; width: 10px; height: 6px; }

/* layer manager */
.current { display: flex; justify-content: space-between; height: 30px; margin: 8px 1px 0 6px; line-height: 30px; flex: none; }
.lsearch { display: flex; align-items: center; width: 155px; height: 20px; background: #48546a; padding-right: 2px; }
.lsearch input { flex: 1; line-height: 20px; }
.lsearch svg { width: 16px; height: 16px; }
.ltools { display: flex; align-items: center; gap: 8px; height: 26px; padding: 0 15px 2px 3px; flex: none; color: #dcdcdc; }
.ltools .vsep { height: 20px; background: #222933; }
.lbody { display: flex; gap: 4px; flex: 1; min-height: 0; padding-right: 1px; }
.filter { width: 34px; border: 1px solid #2e3644; display: flex; flex-direction: column; justify-content: space-between; align-items: center; padding: 6px 0 4px 4px; }
.filter svg { width: 16px; height: 16px; }
.list { position: relative; flex: 1; min-width: 0; display: flex; flex-direction: column; justify-content: space-between; overflow: hidden; background: linear-gradient(#2e3644, #2e3644) 114px 0 / 3px 100% no-repeat; }
.list table { width: 100%; table-layout: fixed; border-collapse: separate; border-spacing: 0; }
.c22 { width: 22px; } .c92 { width: 92px; } .c24 { width: 24px; } .c23 { width: 23px; } .c60 { width: 60px; }
.list th, .list td { padding: 0; white-space: nowrap; text-align: left; font-weight: 400; }
.list th { height: 29px; background: #454e61; border-right: 1px solid #2e3644; padding-left: 5px; }
.list th.st { padding-left: 3px; }
.list th.split { padding-left: 4px; }
.list th.name { border-right: 0; }
.list th .up { display: inline-block; margin-left: 37px; vertical-align: middle; }
.list th.pad { padding-left: 7px; }
.list td { height: 23px; line-height: 22px; }
.list td:nth-child(2) { padding-left: 6px; }
.list .split { border-left: 3px solid #2e3644; }
.list td svg { width: 16px; height: 16px; margin: 0 auto; }
.list td:nth-child(n+8) { padding-left: 5px; }
.list .sw { margin-right: 5px; vertical-align: middle; }
.sel td { background: #7388a8; }
.hscroll { height: 21px; background: #efefef; padding: 9px 0 0 21px; }
.hscroll span { display: block; width: 105px; height: 3px; border-radius: 2px; background: #858585; }
.tip { position: absolute; left: 8px; right: 6px; bottom: 40px; height: 64px; padding: 11px 10px; background: rgba(202, 201, 206, .97); color: #4c4e54; border-radius: 2px; }
.lfoot { display: flex; align-items: center; height: 51px; padding: 11px 0 0 2px; gap: 3px; flex: none; }
.lfoot .caret { margin-right: 5px; }

/* status bar */
.status { display: flex; justify-content: space-between; height: 40px; flex: none; padding-right: 6px; }
.layouts { display: flex; align-items: center; height: 30px; padding-left: 24px; }
.layouts .start { margin-left: 12px; }
.current-layout { height: 30px; padding: 0 23px; margin: 0 8px 0 9px; background: var(--panel); clip-path: polygon(12px 0, 100% 0, calc(100% - 12px) 100%, 0 100%); font-weight: 700; }
.layouts .add { margin-left: 32px; }
.toggles { display: flex; gap: 3px; padding-top: 2px; }
.grp { display: flex; align-items: center; height: 30px; background: var(--panel); }
.grp button { width: 30px; height: 30px; justify-content: center; }
.paper { width: 52px; justify-content: center; }
.snaps { width: 211px; }
.snaps button { width: 31px; }
.snaps .lit { width: 28px; background: #5b8cc4; }
.snaps .lit + .lit { margin-left: 3px; }
.snaps .caret { margin: 0 5px; }
.pair { display: flex; gap: 1px; }
.gearset { width: 50px; }
.gearset .caret { margin-left: 4px; }
.i24 { width: 24px; height: 24px; }
```
